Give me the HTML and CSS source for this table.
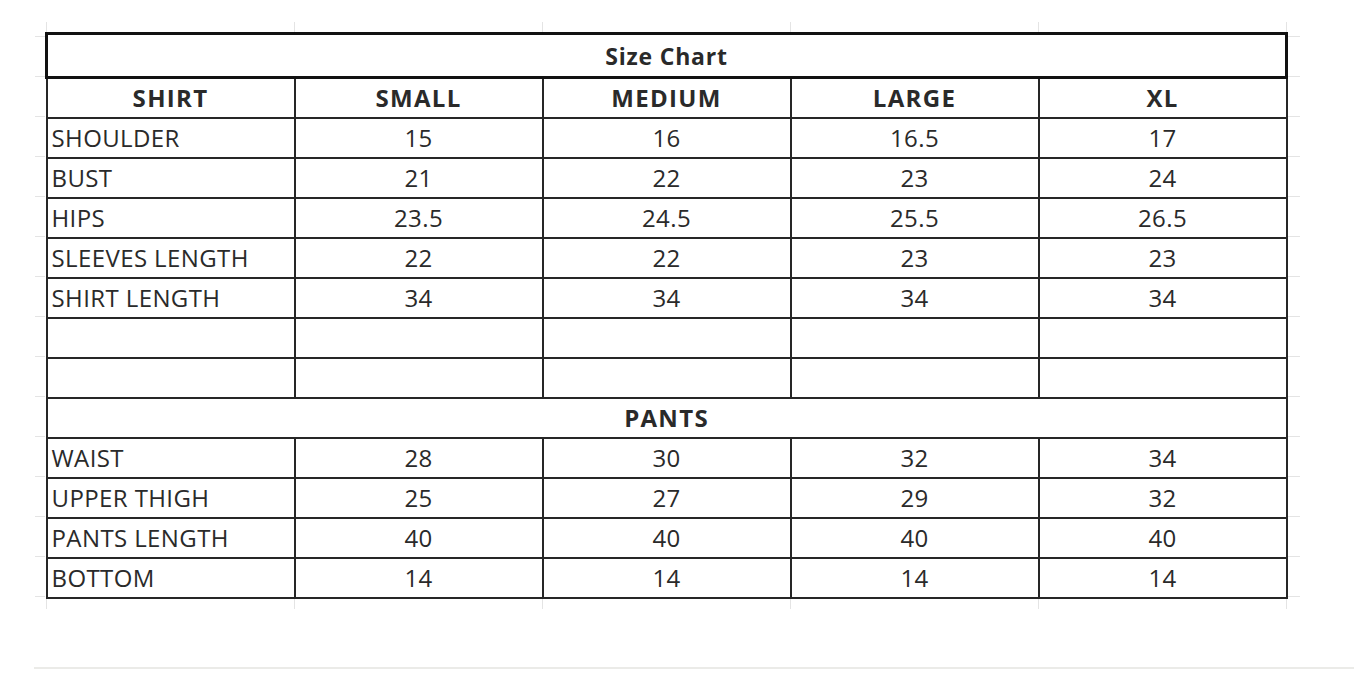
FILE: index.html
```html
<!DOCTYPE html>
<html>
<head>
<meta charset="utf-8">
<link rel="stylesheet" href="styles.css">
</head>
<body>
<div class="page">
  <div class="sheet">
    <table class="chart">
      <colgroup><col><col><col><col><col></colgroup>
      <tr class="title-row"><td colspan="5" class="title">Size Chart</td></tr>
      <tr class="head"><td>SHIRT</td><td>SMALL</td><td>MEDIUM</td><td>LARGE</td><td>XL</td></tr>
      <tr><td class="label">SHOULDER</td><td>15</td><td>16</td><td>16.5</td><td>17</td></tr>
      <tr><td class="label">BUST</td><td>21</td><td>22</td><td>23</td><td>24</td></tr>
      <tr><td class="label">HIPS</td><td>23.5</td><td>24.5</td><td>25.5</td><td>26.5</td></tr>
      <tr><td class="label">SLEEVES LENGTH</td><td>22</td><td>22</td><td>23</td><td>23</td></tr>
      <tr><td class="label">SHIRT LENGTH</td><td>34</td><td>34</td><td>34</td><td>34</td></tr>
      <tr><td></td><td></td><td></td><td></td><td></td></tr>
      <tr><td></td><td></td><td></td><td></td><td></td></tr>
      <tr class="head"><td colspan="5">PANTS</td></tr>
      <tr><td class="label">WAIST</td><td>28</td><td>30</td><td>32</td><td>34</td></tr>
      <tr><td class="label">UPPER THIGH</td><td>25</td><td>27</td><td>29</td><td>32</td></tr>
      <tr><td class="label">PANTS LENGTH</td><td>40</td><td>40</td><td>40</td><td>40</td></tr>
      <tr><td class="label">BOTTOM</td><td>14</td><td>14</td><td>14</td><td>14</td></tr>
    </table>
  </div>
  <div class="rule"></div>
</div>
</body>
</html>
```

FILE: styles.css
```css
html, body {
  margin: 0;
  padding: 0;
  background: #ffffff;
}
.page {
  width: 1364px;
  height: 682px;
  padding-top: 22px;
  box-sizing: border-box;
  font-family: "Open Sans", "Noto Sans", sans-serif;
  color: #2a2a2a;
}
.sheet {
  margin-left: 35px;
  width: 1265px;
  padding: 10px 0 10px 10px;
  box-sizing: border-box;
  background-image:
    repeating-linear-gradient(to bottom, #e4e4e4 0 1px, transparent 1px 40px),
    repeating-linear-gradient(to right, #e4e4e4 0 1px, transparent 1px 248px);
  background-position: 0 14px, 11px 0;
}
.chart {
  width: 1243px;
  border-collapse: collapse;
  table-layout: fixed;
  background: #fff;
}
.chart col {
  width: 248px;
}
.chart td {
  height: 40px;
  padding: 0 4px;
  box-sizing: border-box;
  border: 2px solid #262626;
  font-size: 24px;
  font-weight: 500;
  letter-spacing: 0.4px;
  text-align: center;
  vertical-align: middle;
  line-height: 38px;
  white-space: nowrap;
  background: #fff;
}
.chart td.label {
  text-align: left;
}
.chart .head td {
  font-weight: 700;
  font-size: 24px;
  letter-spacing: 1.3px;
}
.chart .title-row td {
  border: 3px solid #111;
  height: 44px;
  font-size: 23px;
  font-weight: 700;
  letter-spacing: 0.8px;
  line-height: 38px;
}
.rule {
  margin: 58px 10px 0 34px;
  height: 2px;
  background: #ebebe8;
}
```
